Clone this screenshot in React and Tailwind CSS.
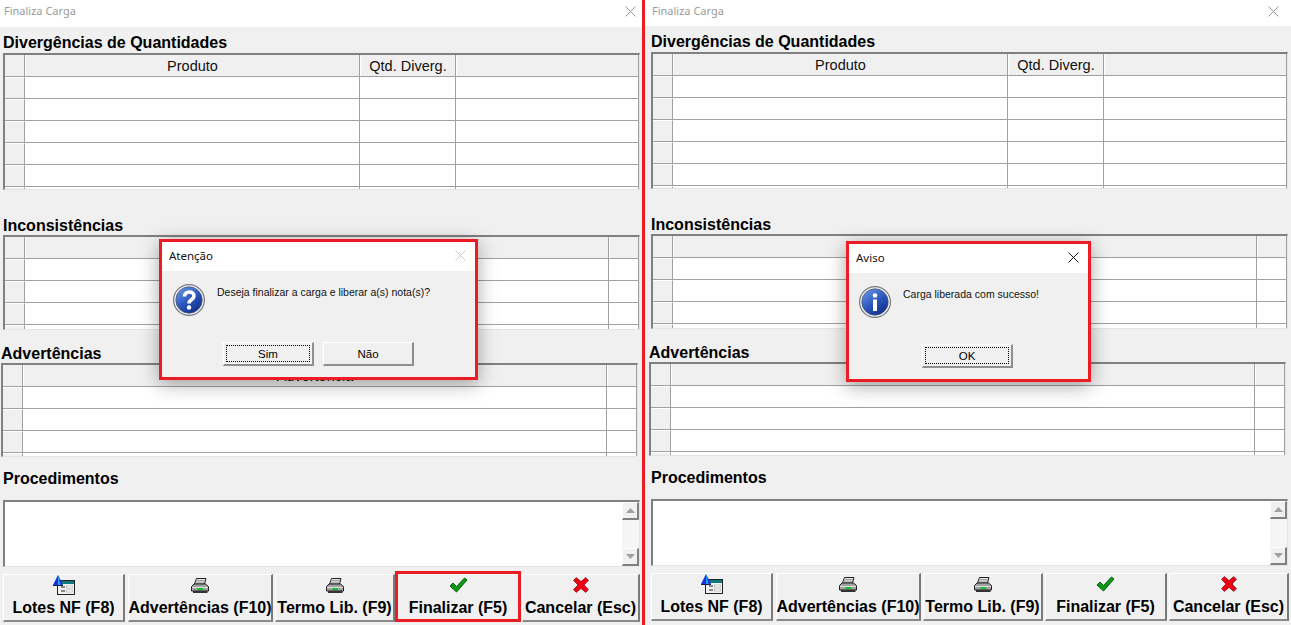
const BEVEL_LINE = 'border-[#a0a0a0]';

const sans = "font-['Liberation_Sans',Arial,sans-serif]";

function LotesIcon() {
  return (
    <svg width="22" height="20" viewBox="0 0 22 20">
      <rect x="4.5" y="5.5" width="17" height="14" fill="#f0f0f0" stroke="#222" />
      <rect x="5" y="6" width="16" height="3" fill="#0f7a7a" />
      <rect x="8" y="11" width="4" height="2" fill="#8a8a8a" />
      <rect x="13.5" y="11" width="6" height="2" fill="#fff" stroke="#9a9a9a" strokeWidth="0.5" />
      <rect x="8" y="15" width="4" height="2" fill="#8a8a8a" />
      <rect x="13.5" y="15" width="6" height="2" fill="#fff" stroke="#9a9a9a" strokeWidth="0.5" />
      <path d="M5 0 L10 10 H0 Z" fill="#1c2fe0" />
      <path d="M5 0 L7.5 10 H5 Z" fill="#22a8e8" />
      <path d="M0 10.5 H10" stroke="#10204a" />
    </svg>
  );
}

function PrinterIcon() {
  return (
    <svg width="18" height="15" viewBox="0 0 18 15">
      <path d="M5.5 0.5 H15 L13.5 6 H3.5 Z" fill="#fff" stroke="#222" />
      <path d="M5.5 2.3 H14 M5 4.1 H13.6" stroke="#555" strokeWidth="0.7" />
      <path d="M3 6 H14.5 L17.5 8.5 V13 H0.5 V8.5 Z" fill="#a2a2a2" stroke="#222" />
      <path d="M1 9.5 H17" stroke="#e0e0e0" />
      <rect x="6.5" y="10" width="5.5" height="2" fill="#10c030" />
      <path d="M2 13 H16.5 V15 H2 Z" fill="#333" />
    </svg>
  );
}

function CheckIcon() {
  return (
    <svg width="19" height="16" viewBox="0 0 19 16">
      <path d="M1 9 L4 6 L7.5 9.5 L15.5 1 L18 3 L7.5 15 Z" fill="#0a9a14" stroke="#0b5c12" strokeWidth="1" strokeLinejoin="round" />
    </svg>
  );
}

function CrossIcon() {
  return (
    <svg width="16" height="16" viewBox="0 0 16 16">
      <path d="M0.6 3.4 L3.2 0.6 L8 4.6 L12.8 0.6 L15.4 3.4 L11 8 L15.4 12.6 L12.8 15.4 L8 11.4 L3.2 15.4 L0.6 12.6 L5 8 Z" fill="#f00010" stroke="#8a1016" strokeWidth="0.8" strokeLinejoin="round" />
    </svg>
  );
}

function CloseX({ color }) {
  return (
    <svg width="11" height="11" viewBox="0 0 11 11">
      <path d="M0.5 0.5 L10.5 10.5 M10.5 0.5 L0.5 10.5" stroke={color} strokeWidth="1" />
    </svg>
  );
}

function Globe({ id, children }) {
  return (
    <svg width="32" height="32" viewBox="0 0 32 32" className="shrink-0">
      <defs>
        <linearGradient id={id} x1="0.2" y1="0.1" x2="0.8" y2="0.95">
          <stop offset="0" stopColor="#5f8ae0" />
          <stop offset="0.5" stopColor="#2a55bb" />
          <stop offset="1" stopColor="#12308c" />
        </linearGradient>
      </defs>
      <circle cx="16" cy="16" r="15.4" fill="#eef0f2" stroke="#74787d" strokeWidth="1.2" />
      <circle cx="16" cy="16" r="13.2" fill={`url(#${id})`} stroke="#46506a" strokeWidth="0.7" />
      {children}
    </svg>
  );
}

function DataGrid({ columns, height, rows }) {
  return (
    <div className={`w-[637px] ${height} overflow-hidden border-t-2 border-l-2 border-t-[#808080] border-l-[#808080] border-r border-b border-r-[#e4e4e4] border-b-[#e4e4e4] bg-white`}>
      <div className={`flex h-[22px] border-b ${BEVEL_LINE} bg-[#f0f0f0]`}>
        <div className={`w-[20px] shrink-0 border-r ${BEVEL_LINE}`} />
        {columns.map((col) => (
          <div
            key={col.key}
            className={`${col.width} flex items-center justify-center border-r ${BEVEL_LINE} border-l border-l-white pt-[2px] text-[14.5px] text-[#111]`}
          >
            {col.label}
          </div>
        ))}
      </div>
      {Array.from({ length: rows + 1 }, (_, i) => (
        <div key={i} className={`flex h-[22px] border-b ${BEVEL_LINE}`}>
          <div className={`w-[20px] shrink-0 border-r ${BEVEL_LINE} border-t border-t-white bg-[#f0f0f0]`} />
          {columns.map((col) => (
            <div key={col.key} className={`${col.width} border-r ${BEVEL_LINE}`} />
          ))}
        </div>
      ))}
    </div>
  );
}

function Heading({ children, className }) {
  return <div className={`flex items-end text-[16px] leading-none font-bold text-black ${className}`}>{children}</div>;
}

function ScrollButton({ up }) {
  return (
    <div className="flex h-[18px] items-center justify-center border-t border-l border-t-white border-l-white border-r-2 border-b-2 border-r-[#808080] border-b-[#808080] bg-[#f0f0f0]">
      <svg width="9" height="5" viewBox="0 0 9 5">
        <path d={up ? 'M4.5 0 L9 5 H0 Z' : 'M0 0 H9 L4.5 5 Z'} fill="#a0a0a0" />
      </svg>
    </div>
  );
}

function ToolButton({ icon, label, width, highlight }) {
  return (
    <div className={`relative flex h-[48px] ${width} shrink-0 flex-col items-center border-t border-l border-t-white border-l-white border-r-2 border-b-2 border-r-[#7a7a7a] border-b-[#8a8a8a] bg-[#f0f0f0]`}>
      <div className="flex h-[20px] items-center">{icon}</div>
      <div className="mt-[3px] text-[16px] leading-[20px] font-bold whitespace-nowrap text-black">{label}</div>
      {highlight && <span className="absolute -top-[4px] -right-[3px] -bottom-[2px] -left-[3px] border-[3px] border-[#ed1c24]" />}
    </div>
  );
}

function Panel({ panelWidth, contentLeft, titleHeight, titleLeft, closeRight, buttonWidths, highlightFinalizar }) {
  return (
    <div className={`${panelWidth} ${contentLeft} h-[625px] shrink-0 overflow-hidden bg-[#f0f0f0]`}>
      <div className={`flex ${titleHeight} items-center justify-between bg-white pb-[4px] ${titleLeft} ${closeRight} text-[11px] text-[#9b9b9b] font-['Noto_Sans',sans-serif]`}>
        <span>Finaliza Carga</span>
        <CloseX color="#9a9a9a" />
      </div>

      <Heading className="h-[26px] pb-[2px]">Divergências de Quantidades</Heading>
      <DataGrid
        height="h-[137px]"
        rows={5}
        columns={[
          { key: 'produto', label: 'Produto', width: 'w-[335px] shrink-0' },
          { key: 'qtd', label: 'Qtd. Diverg.', width: 'w-[96px] shrink-0' },
          { key: 'fill', label: '', width: 'flex-1' },
        ]}
      />

      <Heading className="mt-[21px] h-[24px] pb-[1px]">Inconsistências</Heading>
      <DataGrid
        height="h-[95px]"
        rows={3}
        columns={[
          { key: 'inconsistencia', label: '', width: 'w-[584px] shrink-0' },
          { key: 'fill', label: '', width: 'flex-1' },
        ]}
      />

      <Heading className="mt-[9px] -ml-[2px] h-[24px] pb-[1px]">Advertências</Heading>
      <div className="-ml-[2px]">
        <DataGrid
          height="h-[94px]"
          rows={3}
          columns={[
            { key: 'advertencia', label: 'Advertência', width: 'w-[584px] shrink-0' },
            { key: 'fill', label: '', width: 'flex-1' },
          ]}
        />
      </div>

      <Heading className="mt-[9px] h-[24px] pb-[3px]">Procedimentos</Heading>
      <div className="mt-[10px] flex h-[67px] w-[637px] justify-end border-t-2 border-l-2 border-t-[#808080] border-l-[#808080] border-r border-b border-r-[#e4e4e4] border-b-[#e4e4e4] bg-white">
        <div className="flex w-[17px] flex-col justify-between bg-[#f5f5f5]">
          <ScrollButton up />
          <ScrollButton />
        </div>
      </div>

      <div className="mt-[7px] flex items-start gap-[2px]">
        <ToolButton width={buttonWidths[0]} icon={<LotesIcon />} label="Lotes NF (F8)" />
        <ToolButton width={buttonWidths[1]} icon={<PrinterIcon />} label="Advertências (F10)" />
        <ToolButton width={buttonWidths[2]} icon={<PrinterIcon />} label="Termo Lib. (F9)" />
        <ToolButton width={buttonWidths[3]} icon={<CheckIcon />} label="Finalizar (F5)" highlight={highlightFinalizar} />
        <ToolButton width={buttonWidths[4]} icon={<CrossIcon />} label="Cancelar (Esc)" />
      </div>
    </div>
  );
}

function DialogButton({ label, focused }) {
  return (
    <div className="flex h-[24px] w-[91px] items-center justify-center border-t border-l border-t-white border-l-white border-r-2 border-b-2 border-r-[#8f8f8f] border-b-[#8f8f8f] bg-[#f0f0f0] p-[2px]">
      <div className={`flex h-full w-full items-center justify-center border border-dotted pt-[2px] text-[11.5px] text-black ${focused ? 'border-black' : 'border-transparent'}`}>
        {label}
      </div>
    </div>
  );
}

function Dialog({ position, title, closeColor, icon, text, iconLeft, children }) {
  return (
    <div className={`absolute ${position} flex flex-col border-[3px] border-[#ed1c24] bg-[#f0f0f0] shadow-[0_4px_18px_rgba(0,0,0,0.35)] ${sans}`}>
      <div className="flex h-[29px] shrink-0 items-center justify-between bg-white pr-[9px] pb-[2px] pl-[7px] text-[11.5px] text-[#111] font-['Noto_Sans',sans-serif]">
        <span>{title}</span>
        <CloseX color={closeColor} />
      </div>
      <div className="flex flex-1 flex-col">
        <div className={`flex items-start gap-[12px] pt-[13px] ${iconLeft}`}>
          {icon}
          <div className="pt-[1px] text-[10.5px] leading-[14px] text-[#111]">{text}</div>
        </div>
        {children}
      </div>
    </div>
  );
}

export default function App() {
  return (
    <div className={`relative flex h-[625px] w-[1291px] overflow-hidden bg-[#f0f0f0] ${sans}`}>
      <Panel
        panelWidth="w-[642px]"
        contentLeft="pl-[3px]"
        titleHeight="h-[27px]"
        titleLeft="-ml-[3px] pl-[4px]"
        closeRight="pr-[6px]"
        buttonWidths={['w-[122px] mr-[1px]', 'w-[145px]', 'w-[120px]', 'w-[123px]', 'w-[118px]']}
        highlightFinalizar
      />
      <div className="w-[3px] shrink-0 bg-[#ed1c24]" />
      <Panel
        panelWidth="w-[646px]"
        contentLeft="pl-[6px]"
        titleHeight="h-[26px]"
        titleLeft="-ml-[6px] pl-[7px]"
        closeRight="pr-[12px]"
        buttonWidths={['w-[122px] mr-[1px]', 'w-[145px]', 'w-[120px]', 'w-[122px]', 'w-[120px]']}
      />

      <Dialog
        position="top-[239px] left-[159px] h-[141px] w-[319px]"
        title="Atenção"
        closeColor="#c8c8c8"
        iconLeft="pl-[11px]"
        text="Deseja finalizar a carga e liberar a(s) nota(s)?"
        icon={
          <Globe id="question-globe">
            <path d="M11.5 12.5 C11.5 6.5 21 6.5 21 12 C21 15.5 16 15.5 16 19.5" fill="none" stroke="#fff" strokeWidth="3.6" />
            <circle cx="16" cy="23.5" r="2.2" fill="#fff" />
          </Globe>
        }
      >
        <div className="mt-[26px] flex gap-[9px] pl-[61px]">
          <DialogButton label="Sim" focused />
          <DialogButton label="Não" />
        </div>
      </Dialog>

      <Dialog
        position="top-[241px] left-[846px] h-[141px] w-[245px]"
        title="Aviso"
        closeColor="#111"
        iconLeft="pl-[10px]"
        text="Carga liberada com sucesso!"
        icon={
          <Globe id="info-globe">
            <circle cx="16" cy="9.5" r="2.3" fill="#fff" />
            <rect x="14" y="13.5" width="4" height="11.5" fill="#fff" />
          </Globe>
        }
      >
        <div className="mt-[26px] flex pl-[73px]">
          <DialogButton label="OK" focused />
        </div>
      </Dialog>
    </div>
  );
}
